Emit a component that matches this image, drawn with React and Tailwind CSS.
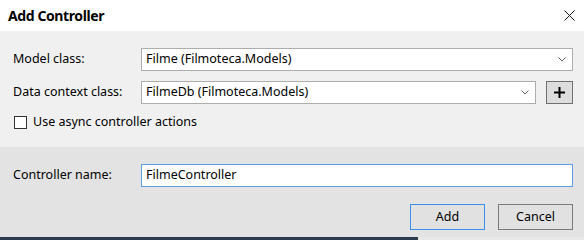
const font = { fontFamily: '"Noto Sans", "Open Sans", sans-serif' };

const Chevron = () => (
  <svg width="8" height="5" viewBox="0 0 8 5" className="shrink-0">
    <path d="M0.5 0.5 L4 4 L7.5 0.5" fill="none" stroke="#606060" strokeWidth="1" />
  </svg>
);

const Combo = ({ value, className = "" }) => (
  <div
    className={`h-[23px] flex items-center justify-between bg-white border border-[#adadad] pl-[4px] pr-[6px] ${className}`}>
    <span className="text-[12.5px] text-black leading-none">{value}</span>
    <Chevron />
  </div>
);

export default function App() {
  return (
    <div className="w-[584px] h-[240px] flex flex-col overflow-hidden bg-white" style={font}>
      <div className="h-[31px] shrink-0 flex items-center justify-between pl-[8px] pr-[9px] bg-white">
        <span className="text-[14px] font-bold text-black leading-none tracking-[-0.4px]">Add Controller</span>
        <svg width="11" height="11" viewBox="0 0 11 11">
          <path d="M0.5 0.5 L10.5 10.5 M10.5 0.5 L0.5 10.5" stroke="#111" strokeWidth="1" />
        </svg>
      </div>

      <div className="h-[116px] shrink-0 bg-[#f0f0f0] pt-[17px] pl-[13px] pr-[11px] flex flex-col">
        <div className="flex items-center h-[23px]">
          <span className="w-[128px] text-[12.5px] text-black">Model class:</span>
          <Combo value="Filme (Filmoteca.Models)" className="flex-1" />
        </div>
        <div className="flex items-center h-[23px] mt-[10px]">
          <span className="w-[128px] text-[12.5px] text-black">Data context class:</span>
          <Combo value="FilmeDb (Filmoteca.Models)" className="w-[395px]" />
          <button className="ml-[10px] w-[27px] h-[23px] flex items-center justify-center bg-[#dddddd] border border-[#707070]">
            <svg width="13" height="13" viewBox="0 0 13 13">
              <path d="M6.5 1 V12 M1 6.5 H12" stroke="#000" strokeWidth="2" />
            </svg>
          </button>
        </div>
        <div className="flex items-center mt-[11px] h-[14px]">
          <span className="ml-[1px] w-[13px] h-[13px] bg-white border border-[#333333]" />
          <span className="ml-[6px] text-[12.5px] text-black leading-none">Use async controller actions</span>
        </div>
      </div>

      <div className="h-[90px] shrink-0 bg-[#e3e3e3] pt-[17px] pl-[13px] pr-[11px] flex flex-col">
        <div className="flex items-center h-[23px]">
          <span className="w-[128px] text-[12.5px] text-black">Controller name:</span>
          <div className="flex-1 h-[23px] flex items-center bg-white border border-[#5b9fe6] pl-[4px]">
            <span className="text-[12.5px] text-black leading-none">FilmeController</span>
          </div>
        </div>
        <div className="flex justify-end gap-[13px] mt-[17px]">
          <button className="w-[75px] h-[26px] bg-[#e1e1e1] border border-[#3c8fe8] text-[12.5px] text-black">Add</button>
          <button className="w-[75px] h-[26px] bg-[#e1e1e1] border border-[#7a7a7a] text-[12.5px] text-black">Cancel</button>
        </div>
      </div>

      <div className="flex-1 flex">
        <div className="w-[418px] bg-[#2c3b4d]" />
        <div className="flex-1 bg-[#e8e8e8]" />
      </div>
    </div>
  );
}
